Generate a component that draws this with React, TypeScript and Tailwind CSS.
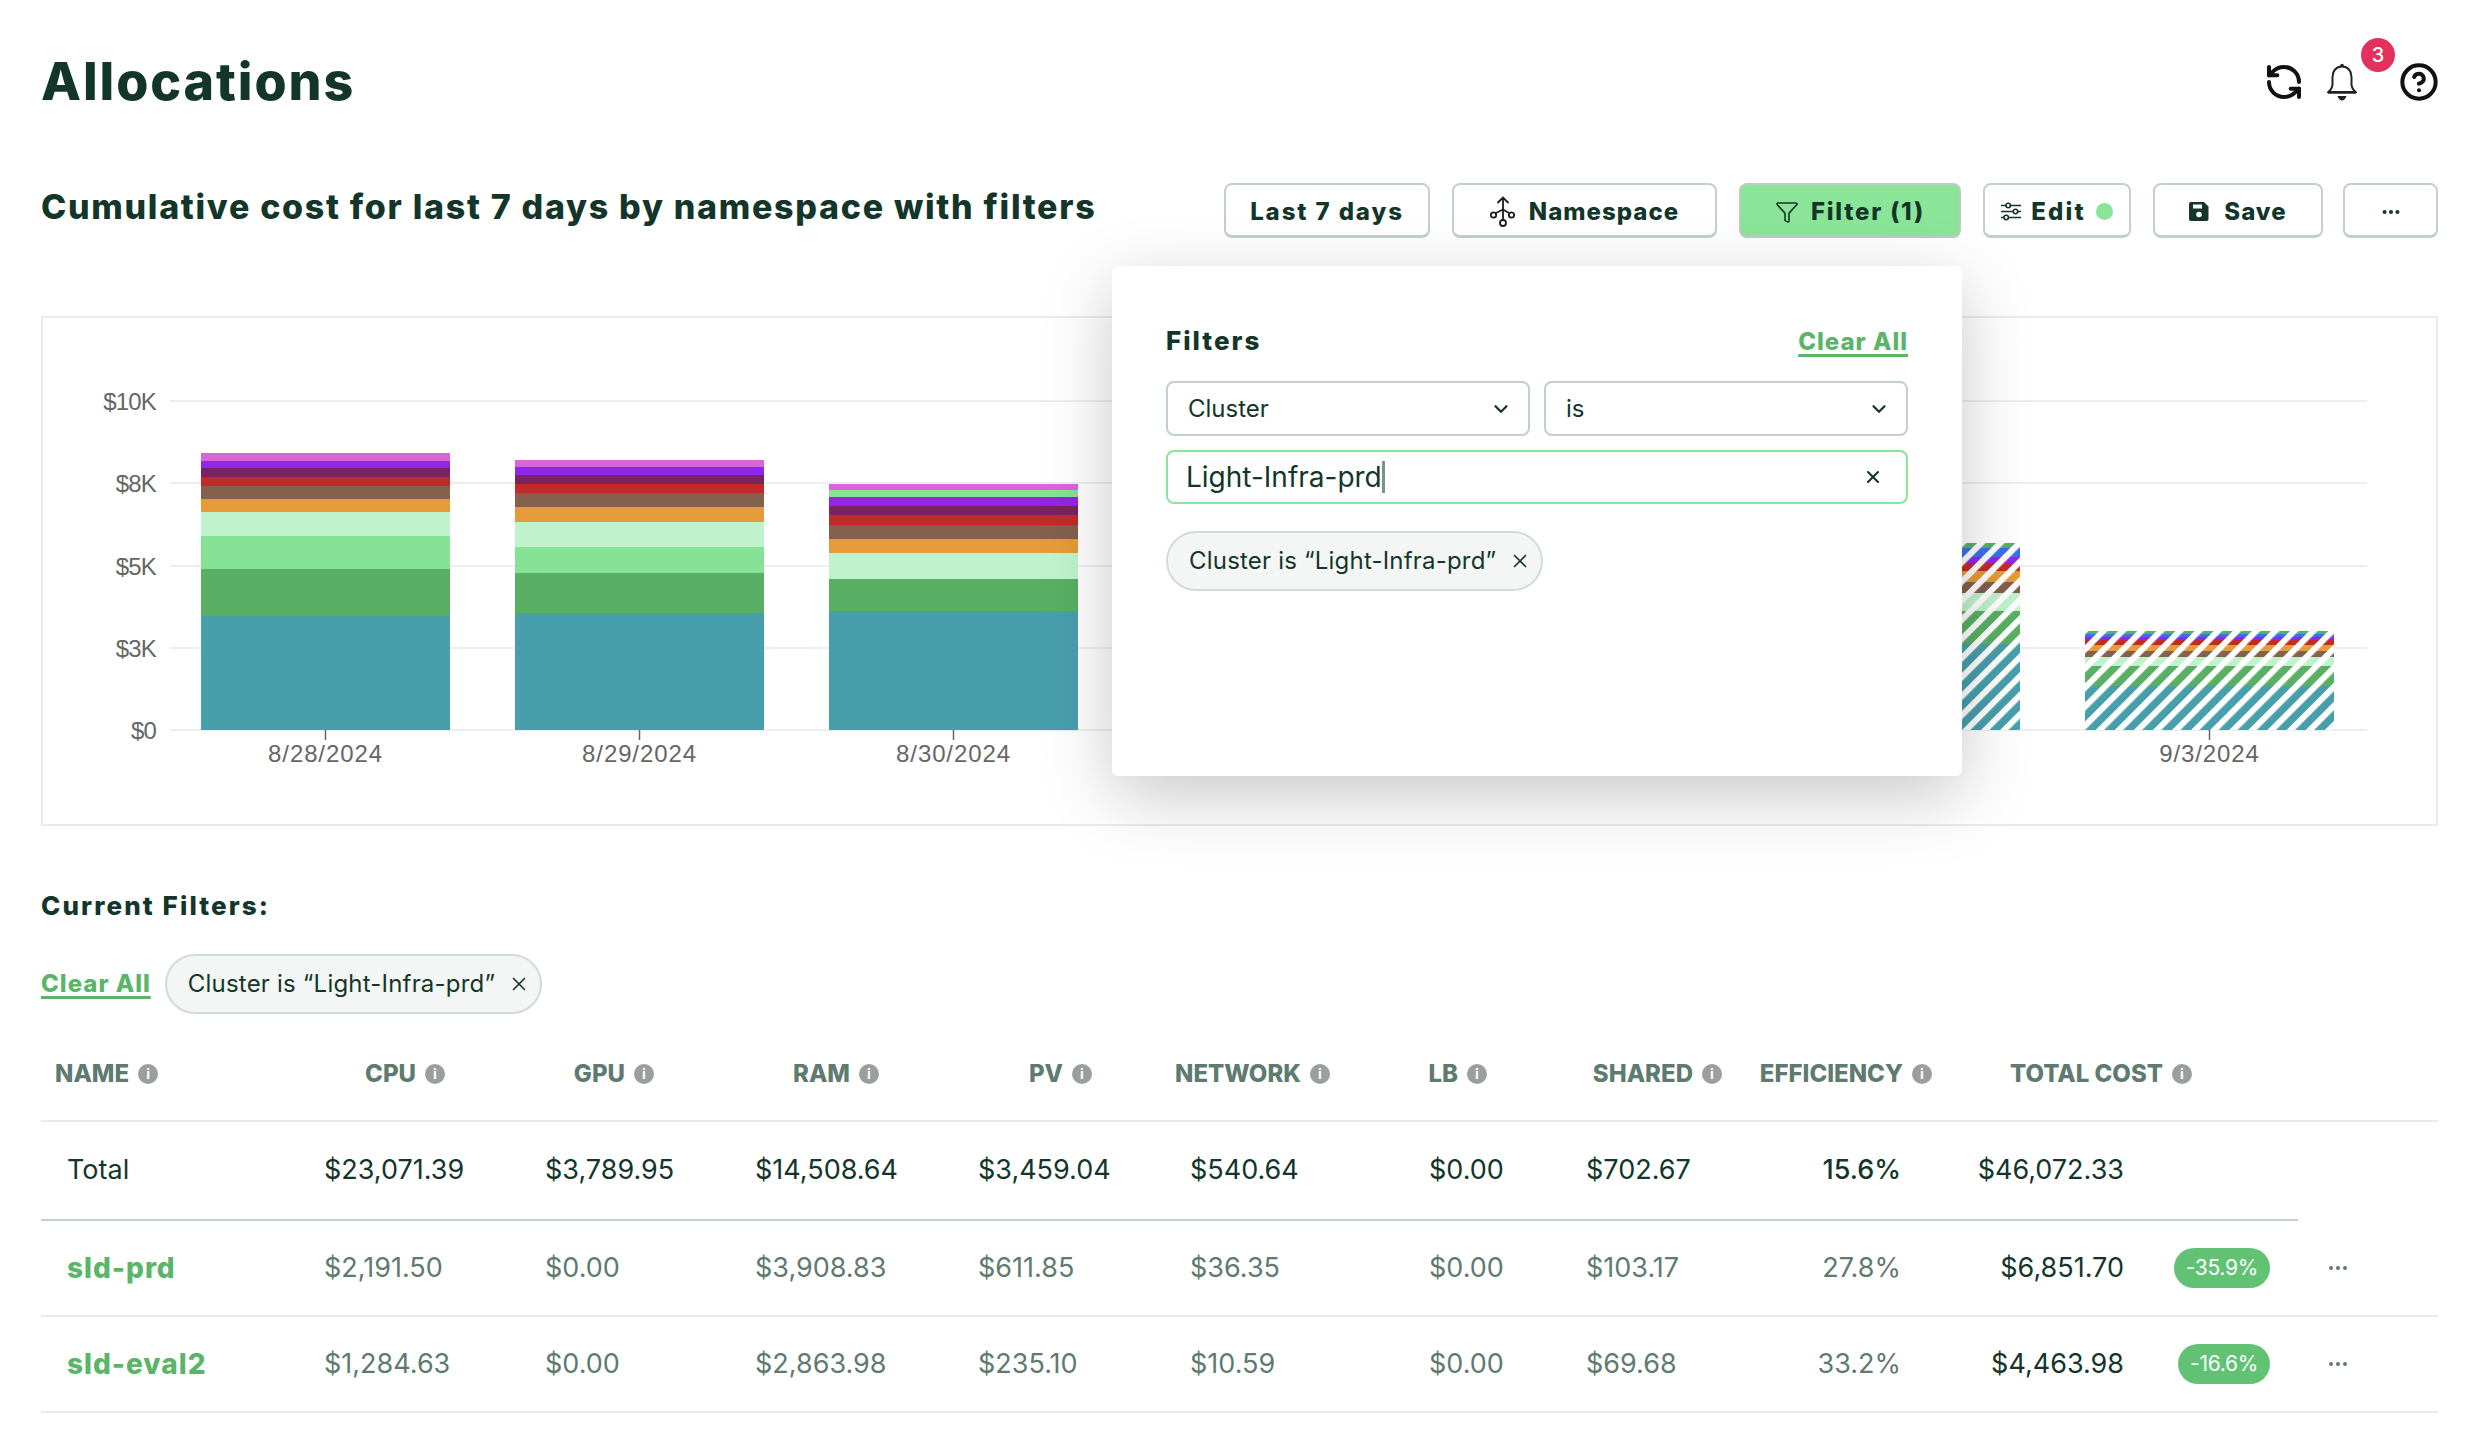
import { ChevronDown, CircleHelp, Ellipsis, Filter, RefreshCcw, X } from 'lucide-react';

const dark = 'text-[#14362a]';

type Segment = [number, string];

// page coordinates: each segment is [bottom y, colour], listed from the top down
const bars: { x: number; top: number; label: string; hatched?: boolean; segments: Segment[] }[] = [
  {
    x: 201,
    top: 453,
    label: '8/28/2024',
    segments: [
      [461, '#d966d8'],
      [468, '#8f27e9'],
      [477, '#7b2260'],
      [486, '#c22a28'],
      [499, '#83614c'],
      [512, '#e59b37'],
      [536, '#c0f3cb'],
      [569, '#86e295'],
      [616, '#59b064'],
      [730, '#489fac'],
    ],
  },
  {
    x: 515,
    top: 460,
    label: '8/29/2024',
    segments: [
      [467, '#d966d8'],
      [475, '#8f27e9'],
      [484, '#7b2260'],
      [493, '#c22a28'],
      [507, '#83614c'],
      [522, '#e59b37'],
      [547, '#c0f3cb'],
      [573, '#86e295'],
      [613, '#59b064'],
      [730, '#489fac'],
    ],
  },
  {
    x: 829,
    top: 484,
    label: '8/30/2024',
    segments: [
      [490, '#d966d8'],
      [497, '#86e295'],
      [506, '#8f27e9'],
      [515, '#7b2260'],
      [525, '#c22a28'],
      [539, '#83614c'],
      [553, '#e59b37'],
      [579, '#c0f3cb'],
      [611, '#59b064'],
      [730, '#489fac'],
    ],
  },
  {
    x: 1771,
    top: 543,
    label: '9/2/2024',
    hatched: true,
    segments: [
      [548, '#59b064'],
      [557, '#3f6fe8'],
      [563, '#8f27e9'],
      [571, '#c22a28'],
      [582, '#e59b37'],
      [593, '#83614c'],
      [611, '#c0f3cb'],
      [644, '#59b064'],
      [730, '#489fac'],
    ],
  },
  {
    x: 2085,
    top: 631,
    label: '9/3/2024',
    hatched: true,
    segments: [
      [634, '#59b064'],
      [637, '#3f6fe8'],
      [640, '#8f27e9'],
      [645, '#c22a28'],
      [651, '#e59b37'],
      [657, '#83614c'],
      [666, '#c0f3cb'],
      [686, '#59b064'],
      [730, '#489fac'],
    ],
  },
];

const ticks: [number, string][] = [
  [401, '$10K'],
  [483, '$8K'],
  [566, '$5K'],
  [648, '$3K'],
  [730, '$0'],
];

function CostChart() {
  return (
    <svg className="block h-full w-full" viewBox="43 318 2393 506">
      <defs>
        <pattern id="hatch" width="13.5" height="13.5" patternUnits="userSpaceOnUse" patternTransform="rotate(45)">
          <rect width="6" height="13.5" fill="white" />
        </pattern>
      </defs>
      {ticks.map(([y, label]) => (
        <g key={label}>
          <line x1={170} x2={2367} y1={y} y2={y} stroke="#ecefee" strokeWidth={2} />
          <text x={156} y={y + 9} textAnchor="end" fontSize={24} fill="#666" fontFamily="Liberation Sans" letterSpacing={-0.8}>
            {label}
          </text>
        </g>
      ))}
      {bars.map((bar) => {
        let y = bar.top;
        return (
          <g key={bar.label}>
            {bar.segments.map(([bottom, color]) => {
              const rect = <rect key={bottom} x={bar.x} y={y} width={249} height={bottom - y} fill={color} />;
              y = bottom;
              return rect;
            })}
            {bar.hatched && <rect x={bar.x} y={bar.top} width={249} height={730 - bar.top} fill="url(#hatch)" />}
            <line x1={bar.x + 124.5} x2={bar.x + 124.5} y1={730} y2={740} stroke="#666" strokeWidth={1.5} />
            <text x={bar.x + 124.5} y={762} textAnchor="middle" fontSize={24} fill="#666" fontFamily="Liberation Sans" letterSpacing={0.9}>
              {bar.label}
            </text>
          </g>
        );
      })}
    </svg>
  );
}

function Button({ children, active, className }: { children: React.ReactNode; active?: boolean; className: string }) {
  return (
    <button
      className={`flex h-[55px] items-center justify-center rounded-[8px] border-2 border-b-[3px] pt-[3px] text-[24px] font-extrabold ${dark} ${
        active ? 'border-[#b9cdbf] bg-[#8ae598]' : 'border-[#c3cfcb] bg-white'
      } ${className}`}
    >
      {children}
    </button>
  );
}

function BellIcon() {
  return (
    <svg width="30" height="38" viewBox="0 0 30 38" fill="none">
      <circle cx="15" cy="2.5" r="1.8" fill="#222" />
      <path d="M15 3.5c-6 0-9.500 4.500-9.500 10.500v7.500c0 3.500-2 5.500-4 7.500h27c-2-2-4-4-4-7.500V14c0-6-3.500-10.500-9.500-10.500z" stroke="#222" strokeWidth="2" />
      <path d="M1 29.500h28" stroke="#222" strokeWidth="2.500" />
      <path d="M10.500 33h9c-.8 2.500-2.500 4.500-4.500 4.500s-3.700-2-4.500-4.500z" fill="#222" />
    </svg>
  );
}

function NamespaceIcon() {
  return (
    <svg width="25" height="31" viewBox="0 0 25 31" fill="none" stroke="#1c1c1c" strokeWidth="1.8">
      <path d="M13 24V1.500M7.500 7L13 1.500 18.500 7" />
      <path d="M13 13.500L6 17M13 13.500L19 17" />
      <circle cx="3.500" cy="19" r="2.700" />
      <circle cx="21.500" cy="19" r="2.700" />
      <circle cx="13" cy="27" r="3" />
    </svg>
  );
}

function SlidersIcon() {
  return (
    <svg width="20" height="19" viewBox="0 0 20 19" fill="none" stroke="#14362a" strokeWidth="1.6">
      <path d="M0 3.500h5M9.500 3.500H20M0 9.500h12M17 9.500h3M0 15.500h3M7.500 15.500H20" />
      <circle cx="7.200" cy="3.500" r="2.200" />
      <circle cx="14.500" cy="9.500" r="2.200" />
      <circle cx="5.200" cy="15.500" r="2.200" />
    </svg>
  );
}

function SaveIcon() {
  return (
    <svg width="20" height="19" viewBox="0 0 20 19">
      <path d="M2 0h13l4.500 4.500V17a2 2 0 0 1-2 2H2a2 2 0 0 1-2-2V2a2 2 0 0 1 2-2z" fill="#14362a" />
      <rect x="4" y="2.500" width="9" height="4" fill="white" />
      <circle cx="10" cy="12.500" r="2.800" fill="white" />
    </svg>
  );
}

function Chip() {
  return (
    <div className="flex h-[60px] w-[377px] items-center justify-between rounded-full border-2 border-[#d3dbd8] bg-[#f4f6f5] pl-[21px] pr-[10px] text-[24px] tracking-[0.2px]">
      <span className={dark}>Cluster is “Light-Infra-prd”</span>
      <X size={22} className={dark} strokeWidth={1.8} />
    </div>
  );
}

function ClearAll() {
  return (
    <a className="text-[24px] font-extrabold tracking-[1px] text-[#5bb568] underline decoration-[3px] underline-offset-[4px]">Clear All</a>
  );
}

function Select({ label }: { label: string }) {
  return (
    <div className="flex h-[55px] flex-1 items-center justify-between rounded-[8px] border-2 border-[#c3cfcb] pl-[20px] pr-[16px] text-[24px]">
      <span className={dark}>{label}</span>
      <ChevronDown size={22} className={dark} strokeWidth={2.5} />
    </div>
  );
}

function FilterPopup() {
  return (
    <div className="absolute left-[1112px] top-[266px] h-[510px] w-[850px] rounded-[6px] bg-white px-[54px] pt-[58px] shadow-[0_20px_70px_rgba(0,0,0,0.22)]">
      <div className="flex h-[32px] items-center justify-between">
        <span className={`text-[26px] font-extrabold tracking-[2px] ${dark}`}>Filters</span>
        <span className="mt-[4px]">
          <ClearAll />
        </span>
      </div>
      <div className="mt-[25px] flex gap-[14px]">
        <Select label="Cluster" />
        <Select label="is" />
      </div>
      <div className="mt-[14px] flex h-[54px] items-center justify-between rounded-[8px] border-2 border-[#8ae598] pl-[18px] pr-[23px] text-[28px]">
        <span className={`${dark} flex items-center`}>
          Light-Infra-prd
          <span className="h-[32px] w-[3px] bg-[#7d9288]" />
        </span>
        <X size={20} className={dark} strokeWidth={2.5} />
      </div>
      <div className="mt-[27px]">
        <Chip />
      </div>
    </div>
  );
}

function InfoDot() {
  return (
    <span className="flex h-[20px] w-[20px] items-center justify-center rounded-full bg-[#9a9f9d] text-[14px] font-bold leading-none text-white">
      i
    </span>
  );
}

const headers = ['CPU', 'GPU', 'RAM', 'PV', 'NETWORK', 'LB', 'SHARED', 'EFFICIENCY', 'TOTAL COST'];

function HeaderRow() {
  return (
    <div className="grid h-[108px] grid-cols-[259px_145px_209px_225px_213px_238px_157px_235px_210px_260px] items-center border-b-2 border-[#e8ecea] pt-[14px] text-[24px] font-extrabold text-[#5f7a6f]">
      <div className="flex items-center gap-[9px] pl-[14px]">
        NAME
        <InfoDot />
      </div>
      {headers.map((h) => (
        <div key={h} className="flex items-center justify-end gap-[9px] whitespace-nowrap">
          {h}
          <InfoDot />
        </div>
      ))}
    </div>
  );
}

const bodyCols = 'grid grid-cols-[283px_221px_210px_223px_212px_239px_157px_174px_141px_223px_146px_1fr] items-center';

type RowData = { name: string; values: string[]; efficiency: string; total: string; change: string };

const rows: RowData[] = [
  {
    name: 'sld-prd',
    values: ['$2,191.50', '$0.00', '$3,908.83', '$611.85', '$36.35', '$0.00', '$103.17'],
    efficiency: '27.8%',
    total: '$6,851.70',
    change: '-35.9%',
  },
  {
    name: 'sld-eval2',
    values: ['$1,284.63', '$0.00', '$2,863.98', '$235.10', '$10.59', '$0.00', '$69.68'],
    efficiency: '33.2%',
    total: '$4,463.98',
    change: '-16.6%',
  },
];

function TotalRow() {
  const values = ['$23,071.39', '$3,789.95', '$14,508.64', '$3,459.04', '$540.64', '$0.00', '$702.67'];
  return (
    <div className={`${dark} text-[27px]`}>
      <div className={`${bodyCols} h-[97px]`}>
        <div className="pl-[26px]">Total</div>
        {values.map((v, i) => (
          <div key={i}>{v}</div>
        ))}
        <div className="text-right font-medium">15.6%</div>
        <div className="text-right">$46,072.33</div>
      </div>
      <div className="h-[2px] w-[2257px] bg-[#c3cfcb]" />
    </div>
  );
}

function CostRow({ row }: { row: RowData }) {
  return (
    <div className={`${bodyCols} h-[96px] border-b-2 border-[#e8ecea] text-[27px] text-[#5f7a6f]`}>
      <div className="pl-[26px] text-[28px] font-extrabold tracking-[1px] text-[#5bb568]">{row.name}</div>
      {row.values.map((v, i) => (
        <div key={i}>{v}</div>
      ))}
      <div className="text-right">{row.efficiency}</div>
      <div className={`text-right ${dark}`}>{row.total}</div>
      <div className="flex justify-end">
        <span className="flex h-[40px] items-center rounded-full bg-[#61c274] px-[12px] text-[21px] tracking-[-0.3px] text-white">
          {row.change}
        </span>
      </div>
      <div className="pl-[56px]">
        <Ellipsis size={24} className="text-[#5f7a6f]" />
      </div>
    </div>
  );
}

export default function App() {
  return (
    <div className="relative h-[1438px] w-[2474px] overflow-hidden bg-white pl-[41px] pr-[36px] font-['Inter',sans-serif]">
      <div className="flex h-[164px] items-center justify-between">
        <h1 className={`text-[52px] font-extrabold tracking-[1.9px] ${dark}`}>Allocations</h1>
        <div className="-mr-[1px] flex items-center">
          <RefreshCcw size={40} strokeWidth={2.4} className="text-[#111]" />
          <div className="relative ml-[23px]">
            <BellIcon />
            <span className="absolute left-[34px] top-[-25px] flex h-[34px] w-[34px] items-center justify-center rounded-full bg-[#e4305c] text-[20px] font-medium text-white">
              3
            </span>
          </div>
          <CircleHelp size={40} strokeWidth={2.4} className="ml-[42px] text-[#111]" />
        </div>
      </div>

      <div className="mt-[19px] flex h-[55px] items-start justify-between">
        <h2 className={`text-[34px] font-extrabold leading-[47px] tracking-[1.7px] ${dark}`}>
          Cumulative cost for last 7 days by namespace with filters
        </h2>
        <div className="flex gap-[22px]">
          <Button className="w-[206px] tracking-[1.9px]">Last 7 days</Button>
          <Button className="w-[265px] gap-[14px] tracking-[1px]">
            <NamespaceIcon />
            Namespace
          </Button>
          <Button active className="w-[222px] gap-[12px] tracking-[1.8px]">
            <Filter size={24} strokeWidth={1.6} />
            Filter (1)
          </Button>
          <Button className="w-[148px] gap-[10px] tracking-[2.2px]">
            <SlidersIcon />
            Edit
            <span className="h-[17px] w-[17px] rounded-full bg-[#8ae598]" />
          </Button>
          <Button className="w-[170px] gap-[15px] tracking-[1px]">
            <SaveIcon />
            Save
          </Button>
          <Button className="-ml-[2px] w-[95px]">
            <Ellipsis size={22} strokeWidth={2.5} />
          </Button>
        </div>
      </div>

      <div className="mt-[78px] h-[510px] border-2 border-[#e8ecea]">
        <CostChart />
      </div>

      <div className={`mt-[65px] h-[30px] text-[26px] font-extrabold leading-[30px] tracking-[2.1px] ${dark}`}>Current Filters:</div>

      <div className="mt-[33px] flex h-[60px] items-center gap-[14px]">
        <ClearAll />
        <Chip />
      </div>

      <HeaderRow />
      <TotalRow />
      {rows.map((row) => (
        <CostRow key={row.name} row={row} />
      ))}

      <FilterPopup />
    </div>
  );
}
